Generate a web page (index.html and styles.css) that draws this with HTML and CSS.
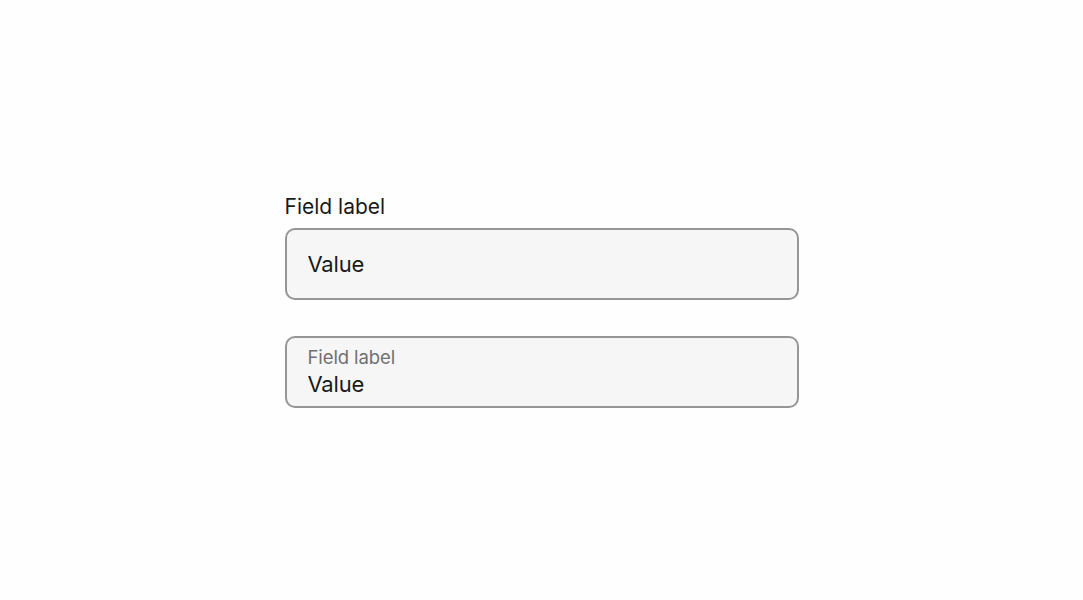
FILE: index.html
```html
<!DOCTYPE html>
<html lang="en">
<head>
<meta charset="utf-8">
<title>Fields</title>
<link rel="stylesheet" href="styles.css">
</head>
<body>
<main class="page">
  <div class="stack">
    <div class="field">
      <label class="field-label" for="f1">Field label</label>
      <div class="box">
        <input id="f1" class="value" value="Value">
      </div>
    </div>
    <div class="box box-float">
      <span class="float-label">Field label</span>
      <input class="value" value="Value" aria-label="Field label">
    </div>
  </div>
</main>
</body>
</html>
```
FILE: styles.css
```css
* { box-sizing: border-box; }
html, body { margin: 0; padding: 0; background: #fefefe; }
body {
  font-family: Inter, "Noto Sans", sans-serif;
  color: #1a1a1a;
}
.page {
  width: 1083px;
  height: 600px;
  display: flex;
  justify-content: center;
  padding-top: 193px;
}
.stack {
  width: 514px;
  display: flex;
  flex-direction: column;
  gap: 36px;
}
.field {
  display: flex;
  flex-direction: column;
  gap: 7px;
}
.field-label {
  font-size: 21px;
  line-height: 28px;
  color: #1a1a1a;
}
.box {
  height: 72px;
  border: 2px solid #969696;
  border-radius: 10px;
  background: #f6f6f6;
  display: flex;
  align-items: center;
  padding: 0 21px;
}
.box-float {
  flex-direction: column;
  align-items: flex-start;
  justify-content: center;
  gap: 2px;
}
.float-label {
  font-size: 18.5px;
  line-height: 22px;
  color: #707070;
  letter-spacing: -0.1px;
}
.value {
  border: 0;
  background: transparent;
  padding: 0;
  margin: 0;
  font: inherit;
  font-size: 22px;
  line-height: 28px;
  color: #1a1a1a;
  outline: none;
  width: 100%;
  letter-spacing: -0.2px;
}
```
